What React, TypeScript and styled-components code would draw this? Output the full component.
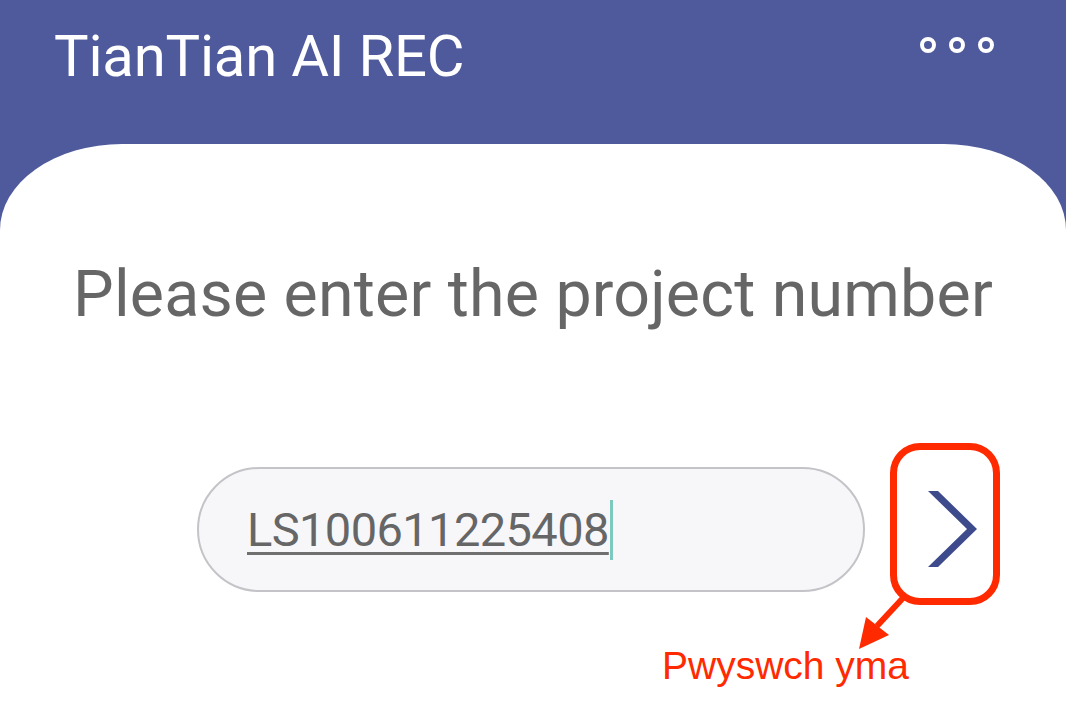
import React from "react";
import styled, { createGlobalStyle } from "styled-components";

const GlobalStyle = createGlobalStyle`
  html, body {
    margin: 0;
    padding: 0;
    background: #4f5a9c;
  }
  #root {
    width: 1066px;
    height: 701px;
    overflow: hidden;
  }
`;

const Screen = styled.div`
  position: relative;
  width: 1066px;
  height: 701px;
  display: flex;
  flex-direction: column;
  background: #4f5a9c;
  font-family: Roboto, "Noto Sans", sans-serif;
`;

const TopBar = styled.div`
  height: 144px;
  display: flex;
  align-items: flex-start;
  justify-content: space-between;
  padding: 21px 72px 0 54px;
  box-sizing: border-box;
`;

const Title = styled.h1`
  margin: 0;
  font-size: 58px;
  font-weight: 400;
  color: #ffffff;
  line-height: 70px;
  letter-spacing: -0.2px;
`;

const MoreMenu = styled.div`
  display: flex;
  gap: 13px;
  margin-top: 16px;
`;

const Dot = styled.span`
  width: 8px;
  height: 8px;
  border: 4px solid #ffffff;
  border-radius: 50%;
`;

const Card = styled.div`
  flex: 1;
  background: #ffffff;
  border-radius: 122px 122px 0 0 / 86px 86px 0 0;
  display: flex;
  flex-direction: column;
  align-items: center;
`;

const Prompt = styled.p`
  margin: 110px 0 0;
  font-size: 64.5px;
  color: #666666;
  line-height: 80px;
  letter-spacing: 0.2px;
`;

const InputRow = styled.div`
  align-self: flex-start;
  display: flex;
  align-items: center;
  margin: 133px 0 0 197px;
  gap: 60px;
`;

const InputPill = styled.div`
  width: 668px;
  height: 125px;
  box-sizing: border-box;
  border: 2px solid #c4c4c8;
  border-radius: 63px;
  background: #f7f7fa;
  display: flex;
  align-items: center;
  padding-left: 48px;
`;

const InputText = styled.span`
  font-size: 47px;
  color: #666666;
  text-decoration: underline;
  text-decoration-thickness: 3px;
  text-underline-offset: 6px;
  text-decoration-color: #707070;
  letter-spacing: -0.6px;
`;

const Caret = styled.span`
  width: 3px;
  height: 60px;
  background: #7dc9bf;
  margin-left: 1px;
`;

const NextButton = styled.button`
  border: none;
  background: transparent;
  padding: 0;
  width: 54px;
  height: 80px;
  display: flex;
  align-items: center;
  justify-content: center;
`;

const Callout = styled.div`
  position: absolute;
  left: 890px;
  top: 443px;
  width: 110px;
  height: 162px;
  box-sizing: border-box;
  border: 7px solid #ff2a00;
  border-radius: 30px;
`;

const CalloutArrow = styled.svg`
  position: absolute;
  left: 850px;
  top: 595px;
`;

const CalloutLabel = styled.span`
  position: absolute;
  left: 662px;
  top: 644px;
  font-family: "Liberation Sans", Arial, sans-serif;
  font-size: 39px;
  color: #ff2a00;
  white-space: nowrap;
`;

export default function App() {
  return (
    <>
      <GlobalStyle />
      <Screen>
        <TopBar>
          <Title>TianTian AI REC</Title>
          <MoreMenu>
            <Dot />
            <Dot />
            <Dot />
          </MoreMenu>
        </TopBar>
        <Card>
          <Prompt>Please enter the project number</Prompt>
          <InputRow>
            <InputPill>
              <InputText>LS100611225408</InputText>
              <Caret />
            </InputPill>
            <NextButton>
              <svg width="54" height="80" viewBox="0 0 54 80">
                <polygon
                  points="3,1 13,1 52,39 13,77 3,77 42,39"
                  fill="#3d4a8c"
                />
              </svg>
            </NextButton>
          </InputRow>
        </Card>
        <Callout />
        <CalloutArrow width="60" height="60" viewBox="0 0 60 60">
          <line x1="53" y1="3" x2="27" y2="31" stroke="#ff2a00" strokeWidth="6" />
          <polygon points="9,54 16,22 39,40" fill="#ff2a00" />
        </CalloutArrow>
        <CalloutLabel>Pwyswch yma</CalloutLabel>
      </Screen>
    </>
  );
}
